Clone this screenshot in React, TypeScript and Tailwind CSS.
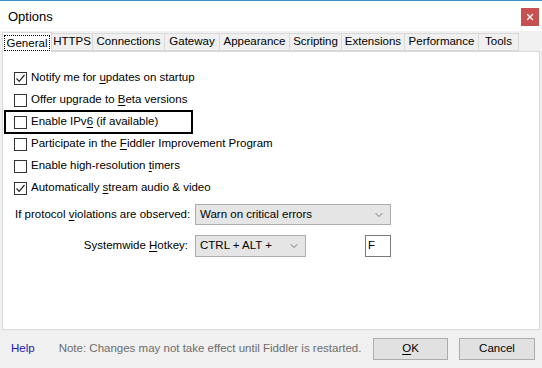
import { ChevronDown, X } from "lucide-react";

const font = { fontFamily: '"Liberation Sans", Arial, sans-serif' };

function Check({ checked }: { checked?: boolean }) {
  return (
    <span className="flex h-[13px] w-[13px] shrink-0 items-center justify-center border border-[#333333] bg-white">
      {checked && (
        <svg width="11" height="11" viewBox="0 0 11 11" fill="none">
          <path d="M1.5 5.5 L4.2 8.3 L9.5 2" stroke="#222222" strokeWidth="1.2" />
        </svg>
      )}
    </span>
  );
}

function U({ children }: { children: string }) {
  return <span className="underline underline-offset-2">{children}</span>;
}

export default function App() {
  const tabs = [
    { name: "General", w: "w-[50px]" },
    { name: "HTTPS", w: "w-[41px]" },
    { name: "Connections", w: "w-[72px]" },
    { name: "Gateway", w: "w-[55px]" },
    { name: "Appearance", w: "w-[70px]" },
    { name: "Scripting", w: "w-[52px]" },
    { name: "Extensions", w: "w-[63px]" },
    { name: "Performance", w: "w-[74px]" },
    { name: "Tools", w: "w-[40px]" },
  ];

  return (
    <div className="h-[368px] w-[542px] overflow-hidden bg-[#f0f0f0] text-[11.5px] text-black" style={font}>
      {/* Title bar */}
      <div className="border-t border-[#3f8fd6] bg-white">
        <div className="flex h-[30px] items-center justify-between pl-[8px] pr-[3px] pt-[1px]">
          <span className="text-[13px]">Options</span>
          <span className="flex h-[18px] w-[18px] items-center justify-center bg-[#c75050] text-white">
            <X size={10} strokeWidth={3} />
          </span>
        </div>
      </div>

      {/* Tabs */}
      <div className="flex h-[20px] items-end pl-[2px] pt-[1px]">
        {tabs.map((t, i) =>
          i === 0 ? (
            <div key={t.name} className={`relative z-10 -mb-px flex h-[20px] ${t.w} items-center justify-center border border-b-0 border-[#d9d9d9] bg-white`}>
              <span className="border border-dotted border-black px-[2px] leading-[14px]">{t.name}</span>
            </div>
          ) : (
            <div key={t.name} className={`flex h-[18px] ${t.w} items-center justify-center border border-l-0 border-[#d9d9d9] bg-[#f0f0f0] leading-none`}>
              {t.name}
            </div>
          )
        )}
      </div>

      {/* Panel */}
      <div className="mx-[2px] h-[279px] border border-[#d9d9d9] bg-white pt-[15px]">
        <div className="flex flex-col">
          {[
            { label: <>Notify me for <U>u</U>pdates on startup</>, checked: true },
            { label: <>Offer upgrade to <U>B</U>eta versions</> },
            { label: <>Enable IPv<U>6</U> (if available)</>, boxed: true },
            { label: <>Participate in the <U>F</U>iddler Improvement Program</> },
            { label: <>Enable high-resolution <U>t</U>imers</> },
            { label: <>Automatically <U>s</U>tream audio &amp; video</>, checked: true },
          ].map((r, i) => (
            <div key={i} className="flex h-[22px] items-center pl-[1px]">
              <div className={`flex h-[24px] w-[189px] items-center gap-[4px] pl-[8px] ${r.boxed ? "border-2 border-black" : "border-2 border-transparent"}`}>
                <Check checked={r.checked} />
                <span className="whitespace-nowrap">{r.label}</span>
              </div>
            </div>
          ))}
        </div>

        <div className="mt-[5px] flex items-center">
          <span className="w-[190px] whitespace-nowrap pl-[12px]">
            If protocol <U>v</U>iolations are observed:
          </span>
          <div className="ml-[2px] flex h-[21px] w-[196px] items-center justify-between border border-[#acacac] bg-[#e5e5e5] pl-[4px] pr-[5px]">
            <span>Warn on critical errors</span>
            <ChevronDown size={12} strokeWidth={1.5} className="text-[#555555]" />
          </div>
        </div>

        <div className="mt-[10px] flex items-center">
          <span className="w-[190px] whitespace-nowrap pr-[5px] text-right">
            Systemwide <U>H</U>otkey:
          </span>
          <div className="ml-[2px] flex h-[22px] w-[111px] items-center justify-between border border-[#acacac] bg-[#e5e5e5] pl-[4px] pr-[5px]">
            <span>CTRL + ALT +</span>
            <ChevronDown size={12} strokeWidth={1.5} className="text-[#555555]" />
          </div>
          <div className="ml-[59px] flex h-[22px] w-[26px] items-center border border-[#7a7a7a] bg-white pl-[2px]">F</div>
        </div>
      </div>

      {/* Footer */}
      <div className="flex h-[38px] items-center">
        <span className="ml-[11px] text-[#1a1ab8]">Help</span>
        <span className="ml-[24px] whitespace-nowrap text-[#6d6d6d]">
          Note: Changes may not take effect until Fiddler is restarted.
        </span>
        <div className="ml-auto mr-[7px] flex gap-[11px]">
          <div className="flex h-[22px] w-[75px] items-center justify-center border border-[#adadad] bg-[#e1e1e1]">
            <U>O</U>K
          </div>
          <div className="flex h-[22px] w-[76px] items-center justify-center border border-[#adadad] bg-[#e1e1e1]">
            Cancel
          </div>
        </div>
      </div>
    </div>
  );
}
